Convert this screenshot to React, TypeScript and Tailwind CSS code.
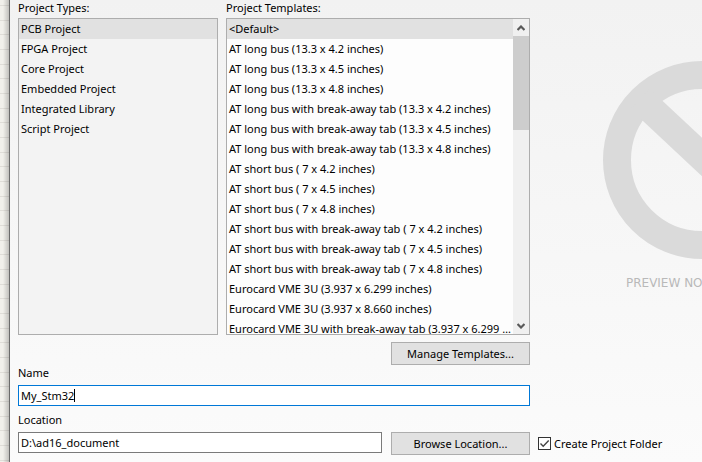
import { useState } from 'react';
import type { ReactNode } from 'react';

const projectTypes = [
  'PCB Project',
  'FPGA Project',
  'Core Project',
  'Embedded Project',
  'Integrated Library',
  'Script Project',
];

const templates = [
  '<Default>',
  'AT long bus (13.3 x 4.2 inches)',
  'AT long bus (13.3 x 4.5 inches)',
  'AT long bus (13.3 x 4.8 inches)',
  'AT long bus with break-away tab (13.3 x 4.2 inches)',
  'AT long bus with break-away tab (13.3 x 4.5 inches)',
  'AT long bus with break-away tab (13.3 x 4.8 inches)',
  'AT short bus ( 7 x 4.2 inches)',
  'AT short bus ( 7 x 4.5 inches)',
  'AT short bus ( 7 x 4.8 inches)',
  'AT short bus with break-away tab ( 7 x 4.2 inches)',
  'AT short bus with break-away tab ( 7 x 4.5 inches)',
  'AT short bus with break-away tab ( 7 x 4.8 inches)',
  'Eurocard VME 3U (3.937 x 6.299 inches)',
  'Eurocard VME 3U (3.937 x 8.660 inches)',
  'Eurocard VME 3U with break-away tab (3.937 x 6.299 inches)',
];

interface ListProps {
  label: string;
  items: string[];
  value: string;
  onChange: (item: string) => void;
}

function List({ label, items, value, onChange }: ListProps) {
  return (
    <ul role="listbox" aria-label={label} className="min-w-0 flex-1">
      {items.map((item) => (
        <li
          key={item}
          role="option"
          aria-selected={item === value}
          onClick={() => onChange(item)}
          className={[
            'h-5 truncate px-0.5 leading-5 cursor-default',
            item === value ? 'bg-[#e1e1e1]' : '',
          ].join(' ')}
        >
          {item}
        </li>
      ))}
    </ul>
  );
}

function Chevron({ up = false }: { up?: boolean }) {
  return (
    <svg viewBox="0 0 8 6" className="h-1.5 w-2" fill="none" stroke="#5a5a5a" strokeWidth="2.2">
      <path d={up ? 'M0.5 5 4 1.5 7.5 5' : 'M0.5 1 4 4.5 7.5 1'} />
    </svg>
  );
}

function ScrollBar() {
  return (
    <div className="flex w-4 shrink-0 flex-col bg-[#f0f0f0]">
      <button aria-label="Scroll up" className="flex h-[17px] items-center justify-center">
        <Chevron up />
      </button>
      <div className="h-[94px] bg-[#cdcdcd]" />
      <button aria-label="Scroll down" className="mt-auto flex h-[17px] items-center justify-center">
        <Chevron />
      </button>
    </div>
  );
}

function PushButton({ children }: { children: ReactNode }) {
  return (
    <button className="h-[23px] w-[139px] shrink-0 border border-[#adadad] bg-[#e1e1e1] leading-5">
      {children}
    </button>
  );
}

function Preview() {
  return (
    <div className="flex w-[344px] shrink-0 flex-col items-center pt-[61px] text-[#b9b9b9]">
      <svg viewBox="0 0 198 198" className="size-[198px]" fill="none" stroke="#dadada" strokeWidth="28">
        <circle cx="99" cy="99" r="85" />
        <path d="M37 38 161 154" />
      </svg>
      <p className="mt-4 font-['DejaVu_Sans',sans-serif] text-xs">PREVIEW NOT AVAILABLE</p>
    </div>
  );
}

export default function App() {
  const [type, setType] = useState(projectTypes[0]);
  const [template, setTemplate] = useState(templates[0]);
  const [name, setName] = useState('My_Stm32');
  const [location, setLocation] = useState('D:\\ad16_document');
  const [createFolder, setCreateFolder] = useState(true);

  return (
    <div className="flex min-h-screen overflow-hidden bg-linear-to-b from-[#f2f2f2] to-[#fbfbfb] font-['Noto_Sans',sans-serif] text-[11px] leading-4 text-black">
      {/* Editor sheet showing past the dialog edge, shaded by the dialog */}
      <div className="flex w-[9px] shrink-0 justify-end bg-[#f1f0eb] bg-[repeating-linear-gradient(to_bottom,transparent_0_5px,#dfddd8_5px_6px,transparent_6px_20px,#dfddd8_20px_21px,transparent_21px_34px,#dfddd8_34px_35px,transparent_35px_44px)]">
        <div className="w-1.5 bg-linear-to-r from-transparent to-black/20" />
      </div>

      <main className="min-w-0 flex-1 overflow-hidden border-l border-[#6b6b6b]">
        <div className="flex">
          <div className="flex w-[520px] shrink-0 flex-col pl-2">
            <div className="flex gap-2">
              <section className="flex w-[200px] flex-col">
                <h2 className="h-[18px]">Project Types:</h2>
                <div className="flex h-[317px] overflow-hidden border border-[#adadad] bg-[#f3f3f3]">
                  <List label="Project Types" items={projectTypes} value={type} onChange={setType} />
                </div>
              </section>
              <section className="flex min-w-0 flex-1 flex-col">
                <h2 className="h-[18px]">Project Templates:</h2>
                <div className="flex h-[317px] overflow-hidden border border-[#adadad] bg-[#fdfdfd]">
                  <List label="Project Templates" items={templates} value={template} onChange={setTemplate} />
                  <ScrollBar />
                </div>
              </section>
            </div>

            <div className="mt-[7px] flex justify-end">
              <PushButton>Manage Templates...</PushButton>
            </div>

            <label htmlFor="name">Name</label>
            <div className="relative mt-1 flex">
              <input
                id="name"
                value={name}
                onChange={(e) => setName(e.target.value)}
                className="h-[21px] min-w-0 flex-1 border border-[#0078d7] bg-white px-0.5 caret-transparent outline-none"
              />
              {/* Steady caret after the last character */}
              <div aria-hidden="true" className="pointer-events-none absolute inset-y-1 left-[3px] flex">
                <span className="invisible">{name}</span>
                <span className="w-px bg-black" />
              </div>
            </div>

            <label htmlFor="location" className="mt-1.5">Location</label>
            <div className="mt-1 flex gap-[9px]">
              <input
                id="location"
                value={location}
                onChange={(e) => setLocation(e.target.value)}
                className="h-[21px] min-w-0 flex-1 border border-[#7a7a7a] bg-white px-0.5 outline-none"
              />
              <PushButton>Browse Location...</PushButton>
            </div>
          </div>

          <div className="flex shrink-0 flex-col justify-between">
            <Preview />
            <label className="flex h-[23px] items-center gap-[3px] pl-2">
              <span className="relative flex">
                <input
                  type="checkbox"
                  checked={createFolder}
                  onChange={(e) => setCreateFolder(e.target.checked)}
                  className="size-[13px] appearance-none border border-[#333333] bg-white"
                />
                {createFolder && (
                  <svg
                    viewBox="0 0 13 13"
                    className="pointer-events-none absolute inset-0 size-[13px]"
                    fill="none"
                    stroke="#444444"
                    strokeWidth="1.4"
                  >
                    <path d="M2.5 6.5 5.2 9.2 10.7 3.6" />
                  </svg>
                )}
              </span>
              Create Project Folder
            </label>
          </div>
        </div>
      </main>
    </div>
  );
}
